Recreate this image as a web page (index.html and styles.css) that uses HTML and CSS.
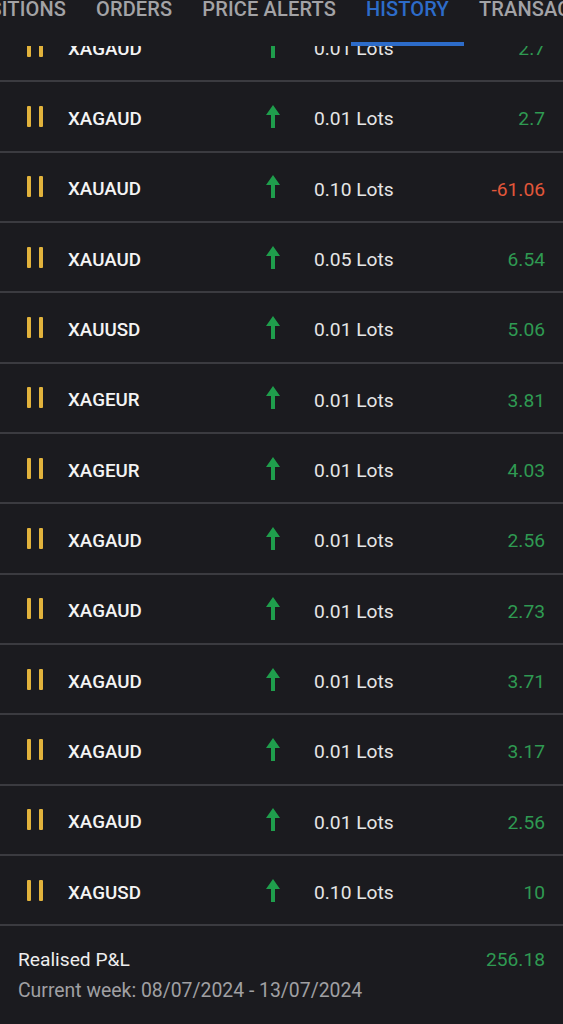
FILE: index.html
```html
<!DOCTYPE html>
<html lang="en">
<head>
<meta charset="utf-8">
<title>History</title>
<link rel="stylesheet" href="styles.css">
</head>
<body>
<div class="app">
  <header class="tabs">
    <div class="tab-strip">
      <span class="tab tab-cut"><span>POSITIONS</span></span>
      <span class="tab">ORDERS</span>
      <span class="tab">PRICE ALERTS</span>
      <span class="tab tab-active">HISTORY</span>
      <span class="tab">TRANSACTIONS</span>
    </div>
  </header>
  <main class="viewport">
    <ul class="list">
      <li class="row"><span class="pause"><i></i><i></i></span><span class="sym">XAGAUD</span><span class="arrow"><svg viewBox="0 0 14 23" width="14" height="23"><path d="M7 0 L14 10 L9 10 L9 23 L5 23 L5 10 L0 10 Z"/></svg></span><span class="lots">0.01 Lots</span><span class="val pos">2.7</span></li>
      <li class="row"><span class="pause"><i></i><i></i></span><span class="sym">XAGAUD</span><span class="arrow"><svg viewBox="0 0 14 23" width="14" height="23"><path d="M7 0 L14 10 L9 10 L9 23 L5 23 L5 10 L0 10 Z"/></svg></span><span class="lots">0.01 Lots</span><span class="val pos">2.7</span></li>
      <li class="row"><span class="pause"><i></i><i></i></span><span class="sym">XAUAUD</span><span class="arrow"><svg viewBox="0 0 14 23" width="14" height="23"><path d="M7 0 L14 10 L9 10 L9 23 L5 23 L5 10 L0 10 Z"/></svg></span><span class="lots">0.10 Lots</span><span class="val neg">-61.06</span></li>
      <li class="row"><span class="pause"><i></i><i></i></span><span class="sym">XAUAUD</span><span class="arrow"><svg viewBox="0 0 14 23" width="14" height="23"><path d="M7 0 L14 10 L9 10 L9 23 L5 23 L5 10 L0 10 Z"/></svg></span><span class="lots">0.05 Lots</span><span class="val pos">6.54</span></li>
      <li class="row"><span class="pause"><i></i><i></i></span><span class="sym">XAUUSD</span><span class="arrow"><svg viewBox="0 0 14 23" width="14" height="23"><path d="M7 0 L14 10 L9 10 L9 23 L5 23 L5 10 L0 10 Z"/></svg></span><span class="lots">0.01 Lots</span><span class="val pos">5.06</span></li>
      <li class="row"><span class="pause"><i></i><i></i></span><span class="sym">XAGEUR</span><span class="arrow"><svg viewBox="0 0 14 23" width="14" height="23"><path d="M7 0 L14 10 L9 10 L9 23 L5 23 L5 10 L0 10 Z"/></svg></span><span class="lots">0.01 Lots</span><span class="val pos">3.81</span></li>
      <li class="row"><span class="pause"><i></i><i></i></span><span class="sym">XAGEUR</span><span class="arrow"><svg viewBox="0 0 14 23" width="14" height="23"><path d="M7 0 L14 10 L9 10 L9 23 L5 23 L5 10 L0 10 Z"/></svg></span><span class="lots">0.01 Lots</span><span class="val pos">4.03</span></li>
      <li class="row"><span class="pause"><i></i><i></i></span><span class="sym">XAGAUD</span><span class="arrow"><svg viewBox="0 0 14 23" width="14" height="23"><path d="M7 0 L14 10 L9 10 L9 23 L5 23 L5 10 L0 10 Z"/></svg></span><span class="lots">0.01 Lots</span><span class="val pos">2.56</span></li>
      <li class="row"><span class="pause"><i></i><i></i></span><span class="sym">XAGAUD</span><span class="arrow"><svg viewBox="0 0 14 23" width="14" height="23"><path d="M7 0 L14 10 L9 10 L9 23 L5 23 L5 10 L0 10 Z"/></svg></span><span class="lots">0.01 Lots</span><span class="val pos">2.73</span></li>
      <li class="row"><span class="pause"><i></i><i></i></span><span class="sym">XAGAUD</span><span class="arrow"><svg viewBox="0 0 14 23" width="14" height="23"><path d="M7 0 L14 10 L9 10 L9 23 L5 23 L5 10 L0 10 Z"/></svg></span><span class="lots">0.01 Lots</span><span class="val pos">3.71</span></li>
      <li class="row"><span class="pause"><i></i><i></i></span><span class="sym">XAGAUD</span><span class="arrow"><svg viewBox="0 0 14 23" width="14" height="23"><path d="M7 0 L14 10 L9 10 L9 23 L5 23 L5 10 L0 10 Z"/></svg></span><span class="lots">0.01 Lots</span><span class="val pos">3.17</span></li>
      <li class="row"><span class="pause"><i></i><i></i></span><span class="sym">XAGAUD</span><span class="arrow"><svg viewBox="0 0 14 23" width="14" height="23"><path d="M7 0 L14 10 L9 10 L9 23 L5 23 L5 10 L0 10 Z"/></svg></span><span class="lots">0.01 Lots</span><span class="val pos">2.56</span></li>
      <li class="row"><span class="pause"><i></i><i></i></span><span class="sym">XAGUSD</span><span class="arrow"><svg viewBox="0 0 14 23" width="14" height="23"><path d="M7 0 L14 10 L9 10 L9 23 L5 23 L5 10 L0 10 Z"/></svg></span><span class="lots">0.10 Lots</span><span class="val pos">10</span></li>
    </ul>
    <section class="summary">
      <div class="summary-line">
        <span class="summary-title">Realised P&amp;L</span>
        <span class="summary-val">256.18</span>
      </div>
      <div class="summary-sub">Current week: 08/07/2024 - 13/07/2024</div>
    </section>
  </main>
</div>
</body>
</html>
```

FILE: styles.css
```css
* { box-sizing: border-box; }
html, body {
  margin: 0;
  padding: 0;
  background: #1b1b1f;
}
body {
  font-family: Roboto, "Noto Sans", sans-serif;
  color: #ececec;
  width: 563px;
  height: 1024px;
  overflow: hidden;
}
.app {
  position: relative;
  height: 1024px;
  display: flex;
  flex-direction: column;
}
.tabs {
  position: relative;
  flex: 0 0 46px;
  height: 46px;
  background: #1b1b1f;
  overflow: hidden;
}
.tab-strip {
  display: flex;
  white-space: nowrap;
  height: 46px;
}
.tab {
  position: relative;
  flex: 0 0 auto;
  padding: 0 15px;
  font-size: 20px;
  font-weight: 500;
  line-height: 18px;
  color: #a3a3a6;
  letter-spacing: 0.15px;
}
.tab-cut {
  flex: 0 0 81px;
  width: 81px;
  min-width: 0;
  display: flex;
  justify-content: flex-end;
  padding: 0 15px 0 0;
}
.tab-cut span { flex: 0 0 auto; }
.tab-active {
  color: #2d6cc9;
}
.tab-active::after {
  content: "";
  position: absolute;
  left: 0;
  right: 0;
  top: 42px;
  height: 4px;
  background: #2d6cc9;
}
.viewport {
  flex: 1;
  overflow: hidden;
  position: relative;
}
.list {
  list-style: none;
  margin: -34px 0 0 0;
  padding: 0;
}
.row {
  display: grid;
  grid-template-columns: 41px 198px 48px 1fr auto;
  align-items: center;
  height: 70.33px;
  padding: 0 18px 0 27px;
  border-bottom: 2px solid #3b3b40;
}
.pause {
  display: flex;
  gap: 8px;
  height: 21px;
}
.pause i {
  display: block;
  width: 4px;
  height: 21px;
  background: #e2b33c;
  border-radius: 1px;
}
.sym, .lots, .val {
  padding-top: 5px;
}
.sym {
  font-size: 18.8px;
  font-weight: 500;
  color: #f4f4f4;
}
.arrow {
  display: flex;
  align-items: center;
}
.arrow svg { display: block; fill: #1f9e4c; }
.lots {
  font-size: 19.2px;
  color: #e6e6e6;
}
.val {
  font-size: 19.2px;
  text-align: right;
}
.pos { color: #2f9a52; }
.neg { color: #e2573a; }
.summary {
  padding: 22px 18px 0 18px;
}
.summary-line {
  display: flex;
  justify-content: space-between;
  align-items: baseline;
  line-height: 23px;
}
.summary-title {
  font-size: 19.2px;
  color: #eeeeee;
}
.summary-val {
  font-size: 19.2px;
  color: #2f9a52;
}
.summary-sub {
  margin-top: 8px;
  line-height: 23px;
  font-size: 19.4px;
  color: #a0a0a3;
}
```
